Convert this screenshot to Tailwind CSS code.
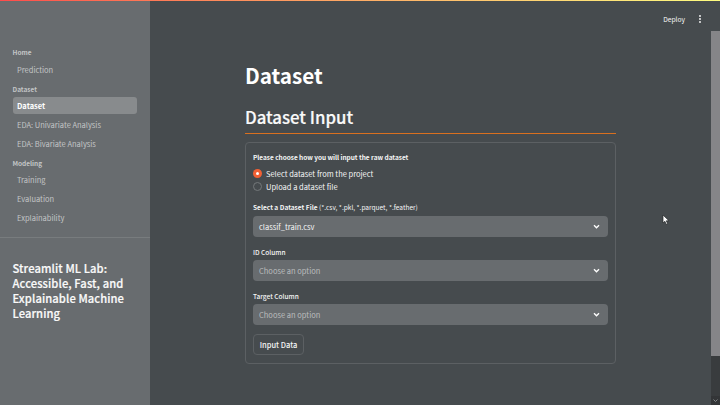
<!DOCTYPE html>
<html lang="en">
<head>
<meta charset="utf-8">
<title>Dataset</title>
<script src="https://cdn.jsdelivr.net/npm/@tailwindcss/browser@4"></script>
</head>
<body class="w-[720px] h-[405px] overflow-hidden bg-[#464b4e] font-['Noto_Sans_CJK_SC','Open_Sans',sans-serif] text-[#f4f5f5] text-[7.5px] whitespace-nowrap">
<div class="relative flex h-full w-full">
  <div class="absolute inset-x-0 top-0 h-px bg-linear-to-r from-[#ff4b4b] to-[#fffd80]"></div>
  <aside class="w-[150px] h-full shrink-0 bg-[#686c6f] pt-[46px] text-[#c3c5c6]">
    <nav class="h-[192px] border-b border-[#787c7e] pl-[12.5px]">
      <h3 class="h-[13px] leading-[13px] text-[6.5px] font-bold">Home</h3>
      <a class="block mt-[2px] h-[17px] leading-[17px] pl-[4.5px]">Prediction</a>
      <h3 class="mt-[5px] h-[12px] leading-[12px] text-[6.5px] font-bold">Dataset</h3>
      <a class="block mt-[2px] h-[17px] leading-[17px] pl-[4.5px] w-[124.5px] rounded-[3px] bg-[#888b8d] font-bold text-white">Dataset</a>
      <a class="block mt-[2px] h-[17px] leading-[17px] pl-[4.5px]">EDA: Univariate Analysis</a>
      <a class="block mt-[2px] h-[17px] leading-[17px] pl-[4.5px]">EDA: Bivariate Analysis</a>
      <h3 class="mt-[5px] h-[12px] leading-[12px] text-[6.5px] font-bold">Modeling</h3>
      <a class="block mt-[2px] h-[17px] leading-[17px] pl-[4.5px]">Training</a>
      <a class="block mt-[2px] h-[17px] leading-[17px] pl-[4.5px]">Evaluation</a>
      <a class="block mt-[2px] h-[17px] leading-[17px] pl-[4.5px]">Explainability</a>
    </nav>
    <h2 class="mt-[23px] pl-[12.5px] text-[11.2px] leading-[15.1px] font-medium text-[#fafafa] [-webkit-text-stroke:0.2px_#fafafa] tracking-[0.09px]">Streamlit ML Lab:<br>Accessible, Fast, and<br>Explainable Machine<br>Learning</h2>
  </aside>
  <main class="flex-1 pl-[95px]">
    <h1 class="mt-[61px] h-[28px] leading-[28px] text-[20.7px] font-bold text-white">Dataset</h1>
    <h2 class="mt-[15px] h-[26px] leading-[26px] text-[16.8px] font-medium text-[#fafafa] [-webkit-text-stroke:0.2px_#fafafa]">Dataset Input</h2>
    <div class="mt-[3px] h-px w-[371px] bg-[#d9701f]"></div>
    <form class="mt-[8px] h-[222px] w-[371px] rounded-[4px] border border-[#5c6063] pl-[7px] pr-[7px] pt-[8px]">
      <p class="h-[12px] leading-[12px] text-[6.5px] font-bold tracking-[-0.03px]">Please choose how you will input the raw dataset</p>
      <div class="mt-[4px] flex h-[13px] items-center gap-[4px]"><span class="flex size-[9px] items-center justify-center rounded-full bg-[#f26034]"><i class="size-[3px] rounded-full bg-white"></i></span><span>Select dataset from the project</span></div>
      <div class="flex h-[13px] items-center gap-[4px]"><span class="size-[9px] rounded-full border border-[#74787a]"></span><span>Upload a dataset file</span></div>
      <p class="mt-[8px] h-[12px] leading-[12px] text-[6.55px]"><b>Select a Dataset File</b> (*.csv, *.pkl, *.parquet, *.feather)</p>
      <div class="mt-[3px] flex h-[21px] items-center justify-between rounded-[4px] bg-[#686c6f] pl-[6px] pr-[8px]"><span>classif_train.csv</span><svg class="size-[7px]" viewBox="0 0 7 7" fill="none" stroke="#fff" stroke-width="1.4"><path d="M1 2.3 3.5 4.7 6 2.3"/></svg></div>
      <p class="mt-[9px] h-[12px] leading-[12px] text-[6.55px] font-medium">ID Column</p>
      <div class="mt-[2px] flex h-[21px] items-center justify-between rounded-[4px] bg-[#686c6f] pl-[6px] pr-[8px]"><span class="text-[#bbbdbe]">Choose an option</span><svg class="size-[7px]" viewBox="0 0 7 7" fill="none" stroke="#fff" stroke-width="1.4"><path d="M1 2.3 3.5 4.7 6 2.3"/></svg></div>
      <p class="mt-[9px] h-[12px] leading-[12px] text-[6.55px] font-medium">Target Column</p>
      <div class="mt-[2px] flex h-[21px] items-center justify-between rounded-[4px] bg-[#686c6f] pl-[6px] pr-[8px]"><span class="text-[#bbbdbe]">Choose an option</span><svg class="size-[7px]" viewBox="0 0 7 7" fill="none" stroke="#fff" stroke-width="1.4"><path d="M1 2.3 3.5 4.7 6 2.3"/></svg></div>
      <button class="mt-[9px] flex h-[21px] w-[51px] items-center justify-center rounded-[4px] border border-[#5c6063] font-medium">Input Data</button>
    </form>
  </main>
  <div class="absolute right-[16px] top-[12px] flex h-[14px] items-center gap-[11px] text-[6.7px]"><span>Deploy</span><svg class="h-[8px] w-[8px]" viewBox="0 0 8 8" fill="#fff"><circle cx="4" cy="1" r=".9"/><circle cx="4" cy="4" r=".9"/><circle cx="4" cy="7" r=".9"/></svg></div>
  <div class="absolute right-0 top-[31px] flex h-[374px] w-[9px] flex-col bg-[#393c3e]"><div class="h-[325px] bg-[#858588]"></div><div class="mt-auto flex h-[9px] items-center justify-center bg-[#333537]"><svg class="size-[5px]" viewBox="0 0 5 5" fill="none" stroke="#85888a"><path d="M.5 1.5 2.5 3.5 4.5 1.5"/></svg></div></div>
  <svg class="absolute left-[662px] top-[214px] h-[12px] w-[8px]" viewBox="0 0 8 12" fill="#fff" stroke="#25282a" stroke-width=".7"><path d="M1 1v8l1.9-1.7 1.3 3 1.4-.6-1.3-2.9H7z"/></svg>
</div>
</body>
</html>
